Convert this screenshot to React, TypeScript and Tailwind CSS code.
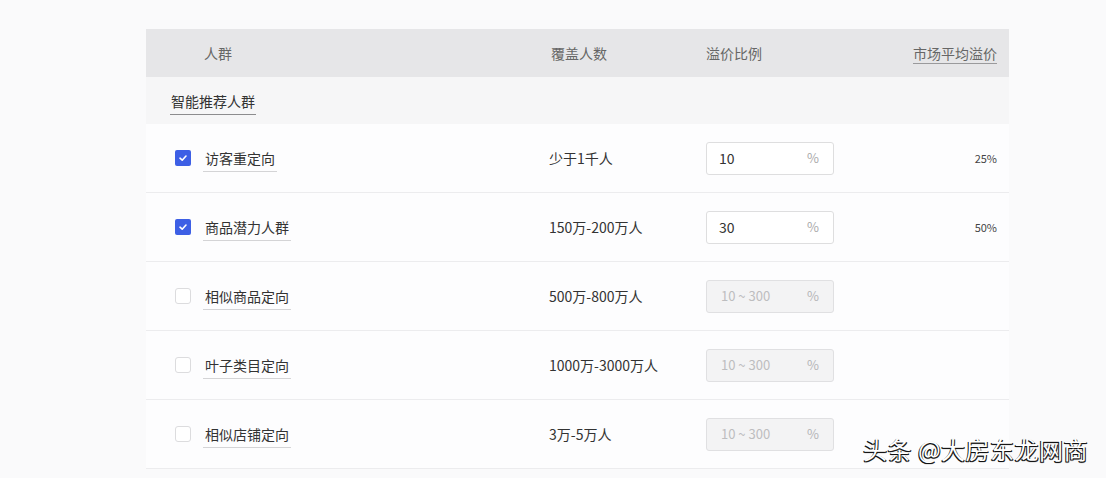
import React, { useState } from 'react'

type Row = {
  name: string
  reach: string
  checked: boolean
  value?: string
  avg?: string
}

const rows: Row[] = [
  { name: '访客重定向', reach: '少于1千人', checked: true, value: '10', avg: '25%' },
  { name: '商品潜力人群', reach: '150万-200万人', checked: true, value: '30', avg: '50%' },
  { name: '相似商品定向', reach: '500万-800万人', checked: false },
  { name: '叶子类目定向', reach: '1000万-3000万人', checked: false },
  { name: '相似店铺定向', reach: '3万-5万人', checked: false },
]

const Check = ({ on, onClick }: { on: boolean; onClick: () => void }) => (
  <button
    onClick={onClick}
    className={
      on
        ? 'w-[16px] h-[16px] rounded-[2px] bg-[#3d5fe5] flex items-center justify-center'
        : 'w-[16px] h-[16px] rounded-[3px] bg-white border border-[#dcdcde]'
    }
  >
    {on && (
      <svg width="10" height="10" viewBox="0 0 10 10">
        <path d="M2 5.2 L4.2 7.2 L8 3" fill="none" stroke="#fff" strokeWidth="1.6" strokeLinecap="round" strokeLinejoin="round" />
      </svg>
    )}
  </button>
)

const App = () => {
  const [checks, setChecks] = useState<boolean[]>(rows.map((r) => r.checked))

  const toggle = (i: number) => setChecks(checks.map((c, j) => (j === i ? !c : c)))

  return (
    <div
      className="relative w-[1106px] h-[478px] overflow-hidden bg-[#fafafb]"
      style={{ fontFamily: '"Noto Sans CJK SC", "Noto Sans", sans-serif' }}
    >
      <div className="ml-[146px] mt-[29px] w-[863px] bg-[#fdfdfe]">
        {/* header */}
        <div className="grid grid-cols-[403px_157px_1fr_auto] items-center h-[48px] bg-[#e6e6e8] pr-[12px] text-[14px] text-[#666]">
          <div className="pl-[58px]">人群</div>
          <div className="pl-[2px]">覆盖人数</div>
          <div>溢价比例</div>
          <div className="border-b border-[#9a9a9c] leading-[20px]">市场平均溢价</div>
        </div>

        {/* section */}
        <div className="h-[47px] flex items-center pl-[24px] bg-[#f6f6f7]">
          <span className="text-[14px] text-[#333] leading-[20px] border-b border-[#8c8c8e] pb-[3px] px-[1px] mt-[4px]">
            智能推荐人群
          </span>
        </div>

        {rows.map((r, i) => (
          <div
            key={r.name}
            className="grid grid-cols-[403px_157px_1fr_auto] items-center h-[69px] border-b border-[#ececee] pr-[12px] text-[14px] text-[#333]"
          >
            <div className="flex items-center pl-[29px] gap-[12px]">
              <Check on={checks[i]} onClick={() => toggle(i)} />
              <span className="leading-[20px] border-b border-[#d4d4d6] pb-[3px] px-[2px] mt-[4px]">{r.name}</span>
            </div>
            <div>{r.reach}</div>
            <div>
              {r.value ? (
                <div className="w-[128px] h-[33px] rounded-[3px] border border-[#dededf] bg-white flex items-center justify-between pl-[12px] pr-[14px]">
                  <span className="text-[14px] text-[#333]">{r.value}</span>
                  <span className="text-[13px] text-[#aaa]">%</span>
                </div>
              ) : (
                <div className="w-[128px] h-[33px] rounded-[3px] border border-[#e0e0e2] bg-[#f3f3f4] flex items-center justify-between pl-[14px] pr-[14px]">
                  <span className="text-[13px] text-[#bdbdbf]">10 ~ 300</span>
                  <span className="text-[13px] text-[#b5b5b7]">%</span>
                </div>
              )}
            </div>
            <div className="text-[11px] text-[#444]">{r.avg ?? ''}</div>
          </div>
        ))}
      </div>

      <div
        className="absolute left-[863px] top-[433px] text-[24px] leading-[32px] text-white tracking-[0.5px]"
        style={{ textShadow: '-1px 1px 0 #111, 1px 1px 0 #222, 0 1px 1px #000' }}
      >
        头条 @大房东龙网商
      </div>
    </div>
  )
}

export default App
